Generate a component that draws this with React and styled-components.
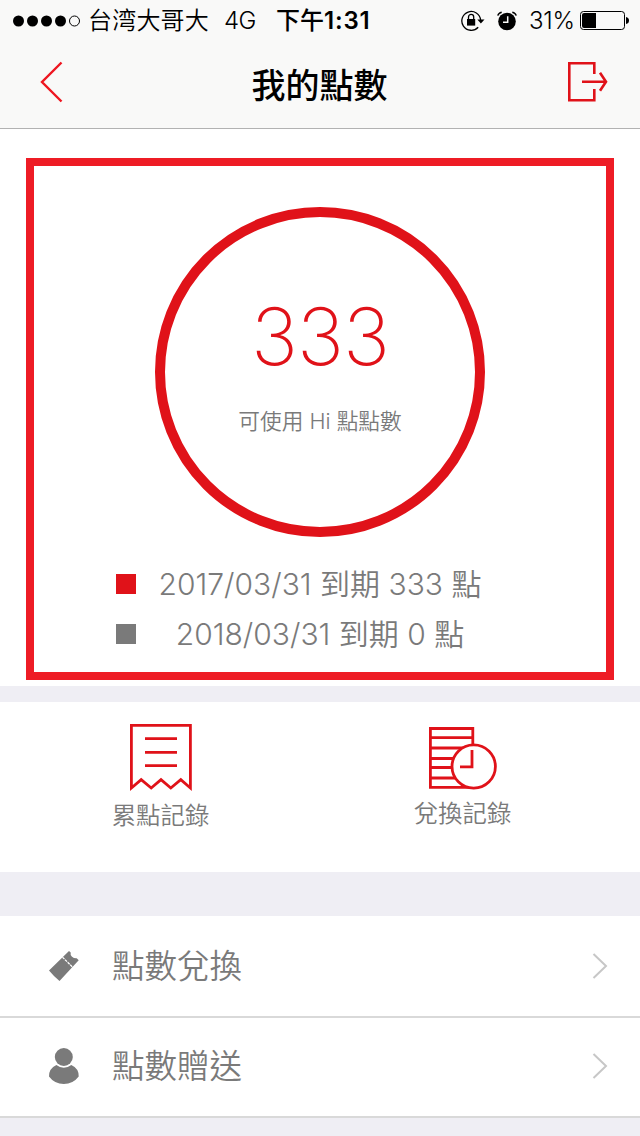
import styled, { createGlobalStyle } from 'styled-components';

const RED = '#e01219';
const GREY = '#7a7a7a';

const GlobalStyle = createGlobalStyle`
  body {
    margin: 0;
    background: #efeef4;
    font-family: Inter, "Noto Sans CJK TC", sans-serif;
    color: ${GREY};
  }

  svg {
    display: block;
    flex: none;
  }
`;

const Page = styled.div`
  width: 640px;
  height: 1136px;
  overflow: hidden;
  background: #efeef4;
`;

const Header = styled.header`
  height: 128px;
  background: #f9f9f8;
  border-bottom: 1px solid #b2b2b2;
  color: #000;
`;

const StatusBar = styled.div`
  height: 41px;
  display: flex;
  align-items: center;
  padding-left: 13px;
`;

const StatusText = styled.span`
  margin-left: ${(props) => props.$gap}px;
  width: ${(props) => props.$width}px;
  font-size: 24px;
  font-weight: ${(props) => props.$weight || 350};
  letter-spacing: ${(props) => props.$spacing || 0}px;
  line-height: 40px;
  white-space: nowrap;
`;

const Clock = styled.b`
  font-weight: 600;
  letter-spacing: 0.8px;
`;

const StatusIcons = styled.div`
  display: flex;
  align-items: center;
  gap: 12px;
  margin-left: auto;
  padding-right: 11px;
`;

const NavBar = styled.div`
  height: 87px;
  display: flex;
  align-items: center;
  justify-content: space-between;
  padding: 0 31px 6px 39px;
  box-sizing: border-box;
`;

const NavButton = styled.button`
  width: 42px;
  padding: 0;
  border: 0;
  background: none;
`;

const Title = styled.h1`
  margin: 0;
  font-size: 34px;
  font-weight: 500;
  line-height: 50px;
  padding: 9px 9px 0 0;
`;

const Summary = styled.section`
  height: 557px;
  padding: 29px 26px 6px;
  box-sizing: border-box;
  background: #fff;
`;

const Frame = styled.div`
  height: 522px;
  border: 8px solid #ee1c25;
  box-sizing: border-box;
  padding-top: 41px;
`;

const Ring = styled.div`
  width: 330px;
  height: 330px;
  margin: 0 auto;
  border: 10px solid ${RED};
  border-radius: 50%;
  box-sizing: border-box;
  display: flex;
  flex-direction: column;
  align-items: center;
`;

const Points = styled.div`
  margin-top: 70px;
  color: ${RED};
  font-size: 79px;
  font-weight: 180;
  line-height: 98px;
  letter-spacing: -0.9px;
`;

const PointsLabel = styled.div`
  margin-top: 20px;
  font-size: 21.7px;
  font-weight: 350;
  line-height: 32px;
  white-space: nowrap;
`;

const ExpiryList = styled.ul`
  margin: 22px 0 0;
  padding: 0 0 0 82px;
  list-style: none;
`;

const ExpiryItem = styled.li`
  height: 50px;
  display: flex;
  align-items: center;
  font-size: 30px;
  font-weight: 350;
  white-space: nowrap;

  &::before {
    content: '';
    width: 20px;
    height: 20px;
    background: ${(props) => props.$color};
  }
`;

const ExpiryText = styled.span`
  width: 326px;
  margin-left: 21px;
  padding-bottom: 4px;
  text-align: center;
`;

const Records = styled.section`
  height: 170px;
  margin-top: 16px;
  display: flex;
  background: #fff;
`;

const RecordLink = styled.a`
  width: ${(props) => props.$width}px;
  display: flex;
  flex-direction: column;
  align-items: center;
  padding-top: ${(props) => props.$top}px;
  box-sizing: border-box;
  font-size: 24.4px;
  font-weight: 350;
  line-height: 36px;
`;

const RecordLabel = styled.span`
  margin-top: ${(props) => props.$gap}px;
`;

const Menu = styled.nav`
  margin-top: 44px;
`;

const MenuItem = styled.a`
  height: ${(props) => props.$height}px;
  display: flex;
  align-items: center;
  padding: 0 32px ${(props) => props.$bottom || 0}px 48px;
  box-sizing: border-box;
  background: #fff;
  border-bottom: 2px solid #d9d9d9;
`;

const MenuLabel = styled.span`
  margin: 0 auto 0 32px;
  padding-top: 2px;
  font-size: 32.5px;
  font-weight: 350;
  line-height: 48px;
`;

const SignalDots = () => (
  <svg width="67" height="12" viewBox="0 0 67 12">
    {[5.5, 19.5, 33.5, 47.5].map((x) => (
      <circle key={x} cx={x} cy="6" r="5.5" />
    ))}
    <circle cx="61.5" cy="6" r="5" fill="none" stroke="#000" />
  </svg>
);

const RotationLock = () => (
  <svg width="24" height="22" viewBox="0 0 24 22">
    <path d="M17.2 17.2A9.4 9.4 0 1 1 19.6 10" fill="none" stroke="#000" strokeWidth="1.3" />
    <path d="M16.3 9.6h7.2l-3.6 4z" />
    <path d="M6 9h8.200v6.600H6z" />
    <path d="M7.500 9.500V7a2.600 2.600 0 0 1 5.200 0v2.500" fill="none" stroke="#000" strokeWidth="1.300" />
  </svg>
);

const Alarm = () => (
  <svg width="20" height="20" viewBox="0 0 20 20">
    <circle cx="10" cy="10.500" r="8.800" />
    <path d="M.8 4.7Q1.500 1.900 4.700 1.200M19.200 4.700Q18.500 1.900 15.300 1.200" fill="none" stroke="#000" strokeWidth="1.400" />
    <path d="M10.700 5.300v6H6" fill="none" stroke="#f9f9f8" strokeWidth="1.500" />
  </svg>
);

const Battery = () => (
  <svg width="49" height="20" viewBox="0 0 49 20">
    <rect x=".5" y=".5" width="44" height="18" rx="3" fill="none" stroke="#000" />
    <path d="M2 4q0-2 2-2h12v15H4q-2 0-2-2z" />
    <path d="M46 6q3 .5 3 3.5T46 13z" />
  </svg>
);

const Back = () => (
  <svg width="26" height="42" viewBox="0 0 26 42">
    <path d="M22.5 1.5 3 21l19.5 19.5" fill="none" stroke="#ee1620" strokeWidth="2.4" />
  </svg>
);

const Exit = () => (
  <svg width="42" height="42" viewBox="0 0 42 42">
    <g fill="none" stroke={RED} strokeWidth="2.6">
      <path d="M27.3 13V2.3H2.3v37h25V28" />
      <path d="M15 20.7h24M33 11.7l6 9-6 9" />
    </g>
  </svg>
);

const Receipt = () => (
  <svg width="62" height="68" viewBox="0 0 62 68">
    <g fill="none" stroke={RED} strokeWidth="2.8">
      <path d="M1.4 64V1.4h59V64l-9.6-8.3-10 8.3-9.8-8.3L21.2 64l-10-8.3z" />
      <path d="M15 14.7h32M15 28.3h32M15 41.7h32" />
    </g>
  </svg>
);

const History = () => (
  <svg width="68" height="64" viewBox="0 0 68 64">
    <g fill="none" stroke={RED} strokeWidth="2.8">
      <path d="M1.4 1.5h42.4v58.8H1.4z" />
      <path d="M1 10.7h43M1 21h43M1 31.5h30M1 40.5h30M1 51h30" />
      <circle cx="44.7" cy="39.5" r="21.7" fill="#fff" />
      <path d="M43 23v16.8H31" />
    </g>
  </svg>
);

const Ticket = () => (
  <svg width="32" height="36" viewBox="0 0 32 36" fill={GREY}>
    <path d="M1 22.5 21 3l1.7 1.4Q22 7 24 8.700T28.700 10.200l2 2L11.500 33Q5.500 28 1 22.500z" />
    <path d="m14.500 9.200 11 10.800" fill="none" stroke="#fff" strokeWidth="1.200" strokeDasharray="2.800 .8" />
  </svg>
);

const Person = () => (
  <svg width="32" height="36" viewBox="0 0 32 36" fill={GREY}>
    <circle cx="15.8" cy="9" r="9" />
    <path d="M8.4 17Q12 19.8 15.8 19.8T23.3 17Q31 20.5 30.7 28.5 25 36 15.8 36T1 28.5Q.8 20.5 8.4 17z" />
  </svg>
);

const Chevron = () => (
  <svg width="16" height="26" viewBox="0 0 16 26">
    <path d="M1.5 1 14 13 1.5 25" fill="none" stroke="#c7c7c7" strokeWidth="2" />
  </svg>
);

const App = () => (
  <Page>
    <GlobalStyle />
    <Header>
      <StatusBar>
        <SignalDots />
        <StatusText $gap={8} $width={121} $spacing={0.2}>台湾大哥大</StatusText>
        <StatusText $gap={15} $width={32} $spacing={-0.5}>4G</StatusText>
        <StatusText $gap={20} $width={96} $weight={500}>下午<Clock>1:31</Clock></StatusText>
        <StatusIcons>
          <RotationLock />
          <Alarm />
          <StatusText $gap={0} $width={39} $spacing={-0.2}>31%</StatusText>
          <Battery />
        </StatusIcons>
      </StatusBar>
      <NavBar>
        <NavButton aria-label="返回"><Back /></NavButton>
        <Title>我的點數</Title>
        <NavButton aria-label="登出"><Exit /></NavButton>
      </NavBar>
    </Header>

    <Summary>
      <Frame>
        <Ring>
          <Points>333</Points>
          <PointsLabel>可使用 Hi 點點數</PointsLabel>
        </Ring>
        <ExpiryList>
          <ExpiryItem $color={RED}>
            <ExpiryText>2017/03/31 到期 333 點</ExpiryText>
          </ExpiryItem>
          <ExpiryItem $color={GREY}>
            <ExpiryText>2018/03/31 到期 0 點</ExpiryText>
          </ExpiryItem>
        </ExpiryList>
      </Frame>
    </Summary>

    <Records>
      <RecordLink $width={321} $top={22}>
        <Receipt />
        <RecordLabel $gap={5}>累點記錄</RecordLabel>
      </RecordLink>
      <RecordLink $width={283} $top={25}>
        <History />
        <RecordLabel $gap={4}>兌換記錄</RecordLabel>
      </RecordLink>
    </Records>

    <Menu>
      <MenuItem $height={102}>
        <Ticket />
        <MenuLabel>點數兌換</MenuLabel>
        <Chevron />
      </MenuItem>
      <MenuItem $height={100} $bottom={2}>
        <Person />
        <MenuLabel>點數贈送</MenuLabel>
        <Chevron />
      </MenuItem>
    </Menu>
  </Page>
);

export default App;
